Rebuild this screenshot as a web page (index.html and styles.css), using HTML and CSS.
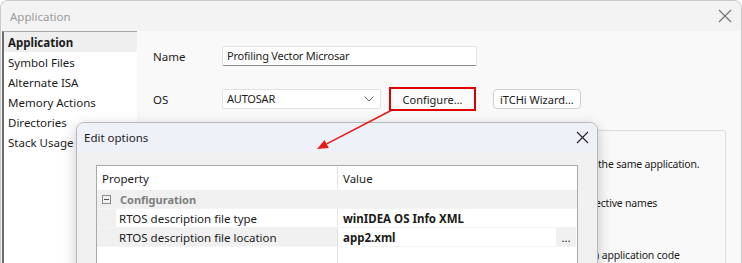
FILE: index.html
```html
<!DOCTYPE html>
<html lang="en">
<head>
    <meta charset="UTF-8">
    <title>Application</title>
    <link rel="stylesheet" href="styles.css">
</head>
<body>
    <div class="window">
        <div class="titlebar">
            <span class="title">Application</span>
            <svg class="close" width="14" height="14" viewBox="0 0 14 14"><path d="M1 1L13 13M13 1L1 13" stroke="#6f6f6f" stroke-width="1.1" fill="none"/></svg>
        </div>
        <div class="main">
            <ul class="nav">
                <li class="active">Application</li>
                <li>Symbol Files</li>
                <li>Alternate ISA</li>
                <li>Memory Actions</li>
                <li>Directories</li>
                <li>Stack Usage</li>
            </ul>
            <div class="pane">
                <div class="row">
                    <label class="lbl">Name</label>
                    <div class="field name-field">Profiling Vector Microsar</div>
                </div>
                <div class="row os-row">
                    <label class="lbl">OS</label>
                    <div class="field select">
                        <span>AUTOSAR</span>
                        <svg width="10" height="6" viewBox="0 0 10 6"><path d="M0.5 0.5L5 5L9.5 0.5" stroke="#666" fill="none"/></svg>
                    </div>
                    <button class="btn configure">Configure…</button>
                    <button class="btn">iTCHi Wizard…</button>
                </div>
                <div class="group">
                    <p class="note first">the same application.</p>
                    <p class="note second">ective names</p>
                    <p class="note third">n application code</p>
                </div>
            </div>
        </div>

        <div class="dialog">
            <div class="dlg-title">
                <span>Edit options</span>
                <svg width="13" height="13" viewBox="0 0 13 13"><path d="M1 1L12 12M12 1L1 12" stroke="#222" stroke-width="1.1" fill="none"/></svg>
            </div>
            <div class="dlg-body">
                <div class="grid">
                    <div class="grow head">
                        <div class="pcell">Property</div>
                        <div class="vcell">Value</div>
                    </div>
                    <div class="grow category">
                        <div class="pcell">
                            <span class="toggle"></span>
                            <b>Configuration</b>
                        </div>
                    </div>
                    <div class="grow">
                        <div class="pcell indented"><span>RTOS description file type</span></div>
                        <div class="vcell"><b>winIDEA OS Info XML</b></div>
                    </div>
                    <div class="grow selected">
                        <div class="pcell indented"><span>RTOS description file location</span></div>
                        <div class="vcell"><b>app2.xml</b><span class="dots">...</span></div>
                    </div>
                    <div class="grow empty">
                        <div class="pcell"></div>
                        <div class="vcell"></div>
                    </div>
                </div>
            </div>
        </div>

        <svg class="arrow" width="742" height="263" viewBox="0 0 742 263">
            <line x1="391" y1="110.5" x2="326.7" y2="143.9" stroke="#e81b1b" stroke-width="1.6"/>
            <polygon points="317,149 328.8,147.9 324.6,139.9" fill="#e81b1b"/>
        </svg>
    </div>
</body>
</html>
```

FILE: styles.css
```css
* {
    box-sizing: border-box;
    margin: 0;
    padding: 0;
}

body {
    font-family: "Noto Sans", "Open Sans", sans-serif;
    font-size: 11.5px;
    color: #1b1b1b;
    background: #ffffff;
}

.window {
    position: relative;
    width: 742px;
    height: 263px;
    overflow: hidden;
    border: 1px solid #c9c9c9;
    border-bottom: none;
    border-radius: 8px 8px 0 0;
    background: #f9f9f9;
    display: flex;
    flex-direction: column;
}

.titlebar {
    height: 30px;
    flex: none;
    background: #f3f3f3;
    display: flex;
    align-items: center;
    justify-content: space-between;
    padding: 0 9px 0 9px;
}

.title {
    color: #9a9a9a;
}

.main {
    flex: 1;
    display: flex;
}

/* left list */
.nav {
    list-style: none;
    width: 135px;
    margin-left: 1px;
    background: #ffffff;
    border-top: 1px solid #a8a8a8;
    border-left: 2px solid #6c6c6c;
}

.nav li {
    height: 20px;
    line-height: 21px;
    padding-left: 4px;
}

.nav li.active {
    background: #efefef;
    font-weight: 700;
}

/* right pane */
.pane {
    flex: 1;
    padding: 15px 15px 0 16px;
}

.row {
    display: flex;
    align-items: center;
    height: 20px;
}

.os-row {
    margin-top: 21px;
    height: 24px;
}

.lbl {
    width: 69px;
}

.field {
    height: 20px;
    background: #ffffff;
    border: 1px solid #e1e1e1;
    border-bottom-color: #8a8a8a;
    border-radius: 2px;
    padding-left: 4px;
    line-height: 18px;
    font-size: 11px;
    letter-spacing: -0.2px;
}

.name-field {
    width: 255px;
}

.select {
    width: 159px;
    display: flex;
    align-items: center;
    justify-content: space-between;
    padding-right: 6px;
    border-bottom-color: #e1e1e1;
}

.btn {
    font: inherit;
    font-size: 11px;
    color: #1b1b1b;
    height: 20px;
    background: #fdfdfd;
    border: 1px solid #d0d0d0;
    border-radius: 4px;
    padding: 0 6px;
}

.configure {
    width: 87px;
    height: 24px;
    margin: 0 17px 0 8px;
    border: 2px solid #e00000;
    border-radius: 0;
    background: #fbfbfb;
}

.group {
    margin-top: 19px;
    height: 200px;
    border: 1px solid #dedede;
    border-radius: 2px;
}

.note {
    height: 20px;
    line-height: 20px;
    font-size: 10.5px;
    letter-spacing: -0.2px;
}

.note.first {
    margin-top: 23px;
    padding-left: 444px;
}

.note.second {
    margin-top: 19px;
    padding-left: 441px;
}

.note.third {
    margin-top: 32px;
    padding-left: 439px;
}

/* overlay dialog */
.dialog {
    position: absolute;
    left: 75px;
    top: 121px;
    width: 522px;
    height: 200px;
    background: #f0f0f0;
    border: 1px solid #b8b8b8;
    border-radius: 8px;
    box-shadow: 0 4px 14px rgba(0, 0, 0, 0.22);
    overflow: hidden;
}

.dlg-title {
    height: 29px;
    background: #eef1f8;
    display: flex;
    align-items: center;
    justify-content: space-between;
    padding: 0 8px 0 7px;
}

.dlg-body {
    padding: 13px 19px 0 19px;
}

.grid {
    background: #ffffff;
    border: 1px solid #a9a9a9;
    height: 140px;
}

.grow {
    display: flex;
    height: 19px;
    border-bottom: 1px solid #f4f4f4;
}

.grow.head {
    height: 24px;
    border-bottom: none;
}

.pcell {
    width: 240px;
    flex: none;
    display: flex;
    align-items: center;
    padding-left: 5px;
}

.vcell {
    flex: 1;
    display: flex;
    align-items: center;
    justify-content: space-between;
    padding-left: 5px;
    border-left: 1px solid #e4e4e4;
}

.category {
    background: #f0f0f0;
}

.category .vcell {
    border-left: none;
}

.category b {
    color: #7d7d7d;
    font-size: 11px;
    margin-left: 9px;
}

.toggle {
    width: 9px;
    height: 9px;
    border: 1px solid #8c8c8c;
    position: relative;
}

.toggle::after {
    content: "";
    position: absolute;
    left: 1px;
    right: 1px;
    top: 3px;
    height: 1px;
    background: #555;
}

.indented {
    padding-left: 0;
    background: #f0f0f0;
}

.indented span {
    display: flex;
    align-items: center;
    height: 100%;
    flex: 1;
    padding-left: 3px;
    margin-left: 19px;
    background: #ffffff;
}

.selected .indented span {
    background: #f0f0f0;
}

.dots {
    width: 20px;
    height: 100%;
    background: #f0f0f0;
    display: flex;
    align-items: center;
    justify-content: center;
    margin-right: 1px;
}

.grow.empty {
    height: 80px;
    border-bottom: none;
}

.arrow {
    position: absolute;
    left: -1px;
    top: -1px;
    pointer-events: none;
}
```
